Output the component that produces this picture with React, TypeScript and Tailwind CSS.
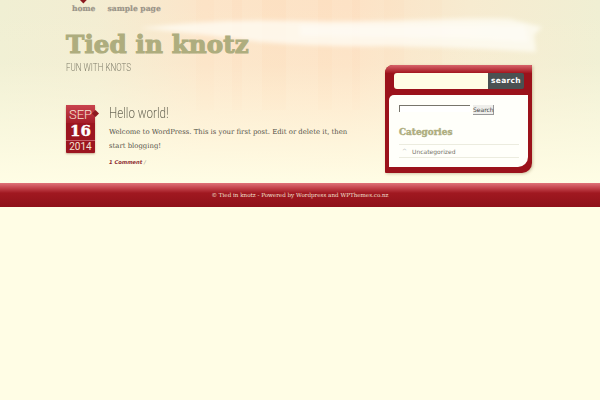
const streaks = [
  [196, 18, 0.08], [232, 10, 0.1], [262, 24, 0.12], [318, 14, 0.1], [352, 8, 0.12], [384, 20, 0.08], [430, 12, 0.06],
];

export default function App() {
  return (
    <div className="relative h-[400px] w-[600px] overflow-hidden bg-[#fffde5] font-['DejaVu_Serif',serif]">
      <div className="absolute left-0 top-0 h-[184px] w-[600px] bg-[linear-gradient(90deg,#f0efd3_0%,#f3edd2_16%,#fce5c9_34%,#fde2c5_58%,#f7ebd0_78%,#f0efd3_100%)]" />
      <svg className="absolute left-0 top-0" width="600" height="184" viewBox="0 0 600 184">
        <defs>
          <filter id="b" x="-10%" y="-50%" width="120%" height="200%">
            <feGaussianBlur stdDeviation="2" />
          </filter>
          <linearGradient id="f" x1="0" y1="0" x2="0" y2="1">
            <stop offset="0" stopColor="#fffde5" stopOpacity="0" />
            <stop offset="0.35" stopColor="#fffde5" stopOpacity="0.1" />
            <stop offset="1" stopColor="#fffde5" stopOpacity="1" />
          </linearGradient>
        </defs>
        {streaks.map(([x, w, o]) => (
          <rect key={x} x={x} y="0" width={w} height="110" fill="#fbd0a8" fillOpacity={o} />
        ))}
        <rect x="0" y="0" width="600" height="184" fill="url(#f)" />
        <path d="M140 28 C190 22 240 19 300 21 C380 23 450 17 510 19 L542 27 L534 35 L536 52 C480 48 430 47 380 46 C330 47 290 44 260 42 C225 37 190 33 140 28Z" fill="#fffef6" fillOpacity="0.72" filter="url(#b)" />
        <path d="M300 25 C380 27 450 23 525 26 L528 42 C450 36 380 38 300 36Z" fill="#ffffff" fillOpacity="0.35" filter="url(#b)" />
      </svg>

      <div className="relative flex h-[183px] flex-col px-[66px]">
        <nav className="flex h-[18px] gap-[12px] pl-[6px] text-[7.6px] font-bold leading-[17px] text-[#9a9488] [-webkit-text-stroke:0.2px_#9a9488]">
          <a className="relative">
            <span className="absolute left-[8px] top-[-3px] h-[5px] w-[6px] rotate-45 bg-[#8c1a1f]" />
            home
          </a>
          <a>sample page</a>
        </nav>
        <h1 className="mt-[10px] text-[24.6px] font-black leading-[34px] tracking-[0.1px] text-[#aead7e] [-webkit-text-stroke:1.1px_#aead7e]">
          Tied in knotz
        </h1>
        <p className="h-[12px] origin-left scale-x-[0.77] whitespace-nowrap font-['Roboto',sans-serif] text-[10.5px] font-light leading-[12px] text-[#7f7d6a]">
          FUN WITH KNOTS
        </p>
        <div className="mt-[31px] flex">
          <div className="relative flex h-[48px] w-[29px] flex-col items-center rounded-[1px] bg-[#9c1520] text-[#f5e3d3] shadow-[0_1px_2px_rgba(120,60,40,0.4)]">
            <span className="h-[18px] w-full rounded-t-[1px] bg-[linear-gradient(180deg,#c9434e,#a51d28)] text-center font-['Roboto',sans-serif] text-[13px] font-light leading-[20px]">SEP</span>
            <span className="h-[17px] text-[15px] font-black leading-[17px] text-white [-webkit-text-stroke:0.4px_#ffffff]">16</span>
            <span className="w-full border-t border-[#c9606a] text-center font-['Roboto',sans-serif] text-[10px] leading-[12px]">2014</span>
            <span className="absolute right-[-3px] top-[6px] h-[5px] w-[5px] rotate-45 bg-[#8c1a1f]" />
          </div>
          <div className="ml-[14px] w-[245px]">
            <h2 className="h-[17px] origin-left scale-x-[0.83] whitespace-nowrap font-['Roboto',sans-serif] text-[14px] font-light leading-[17px] text-[#6f6c5b]">Hello world!</h2>
            <p className="mt-[3px] text-[6.9px] leading-[14px] text-[#55534a]">
              Welcome to WordPress. This is your first post. Edit or delete it, then start blogging!
            </p>
            <p className="mt-[5px] font-['DejaVu_Sans',sans-serif] text-[5.2px] font-bold italic leading-[8px] text-[#8c2a2f]">
              1 Comment <span className="font-normal text-[#9a9488]">/</span>
            </p>
          </div>
        </div>
      </div>

      <aside className="absolute left-[385px] top-[65px] h-[108px] w-[147px] rounded-tl-[8px] rounded-tr-[1px] rounded-bl-[1px] rounded-br-[10px] bg-[#9b121b] shadow-[1px_1px_3px_rgba(150,130,90,0.45)]">
        <div className="h-[8px] rounded-tl-[8px] rounded-tr-[1px] bg-[linear-gradient(180deg,#d8646c,#a3161f)]" />
        <div className="ml-[9px] mr-[8px] flex h-[16px]">
          <div className="w-[94px] rounded-l-[3px] bg-[#fffde5]" />
          <div className="flex-1 rounded-r-[2px] bg-[#4a5152] text-center font-['DejaVu_Sans',sans-serif] text-[7.5px] font-bold leading-[16px] tracking-[0.3px] text-white">search</div>
        </div>
        <div className="ml-[4px] mr-[4px] mt-[6px] h-[72px] rounded-tl-[5px] rounded-br-[10px] bg-[#fffffa] px-[10px] pt-[10px]">
          <div className="flex h-[10px] items-start">
            <div className="h-[7px] w-[71px] border-l border-t border-[#77756c] bg-white" />
            <div className="ml-[3px] h-[10px] w-[21px] border-b border-r border-[#999] bg-[#eeeeea] text-center font-['DejaVu_Sans',sans-serif] text-[6px] leading-[9px] text-[#444]">Search</div>
          </div>
          <h3 className="mt-[10px] text-[8.9px] font-black leading-[14px] text-[#aead7e] [-webkit-text-stroke:0.4px_#aead7e]">Categories</h3>
          <div className="mt-[5px] flex h-[14px] w-[120px] items-center gap-[5px] border-y border-[#ececdf] pl-[3px] font-['DejaVu_Sans',sans-serif] text-[6px] text-[#77756a]">
            <span className="text-[6px] leading-none text-[#aaa]">^</span>
            Uncategorized
          </div>
        </div>
      </aside>

      <footer className="relative h-[24px] bg-[linear-gradient(180deg,#e0747a_0%,#c5454e_20%,#a01820_42%,#8f1119_100%)] text-center text-[5.6px] leading-[24px] text-[#f3e0d4]">
        © Tied in knotz - Powered by Wordpress and WPThemes.co.nz
      </footer>
    </div>
  );
}
